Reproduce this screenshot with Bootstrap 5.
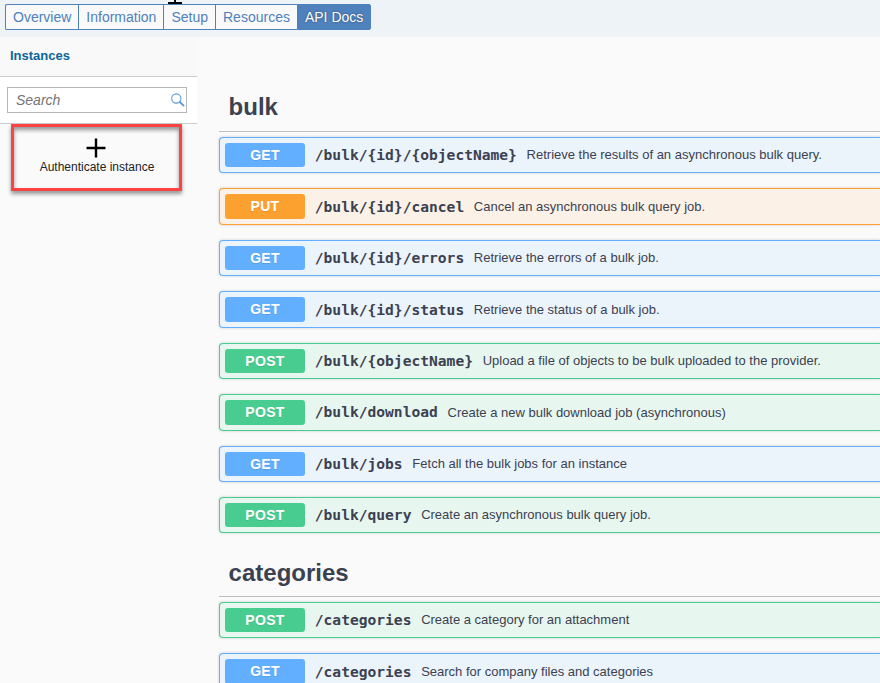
<!DOCTYPE html>
<html lang="en">
<head>
<meta charset="utf-8">
<title>API Docs</title>
<link href="https://cdn.jsdelivr.net/npm/bootstrap@5.3.0/dist/css/bootstrap.min.css" rel="stylesheet">
<style>
body{font-family:"Liberation Sans",Arial,sans-serif;font-size:13px;background:#fafafa;color:#3b4151;height:683px;overflow:hidden}
.topbar{height:37px;background:#eef3f8;padding:4px 0 0 5px}
.tabs{height:26px;font-size:14px}
.tabs .nav-link{padding:0 7px;line-height:24px;color:#4f81bd;background:#f9f9f9;border:1px solid #4f81bd;border-right-width:0;border-radius:0;white-space:nowrap}
.tabs .nav-item:first-child .nav-link{border-radius:2px 0 0 2px}
.tabs .nav-link.active{color:#fff;background:#4f81bd;border-radius:0 2px 2px 0;text-shadow:0 0 2px rgba(0,0,0,.45);border-right-width:1px}
.crosshair{left:168px;top:0}
.side{width:197px}
.side-title{height:40px;line-height:38px;padding-left:10px;background:#f9f9f9;color:#0b659c;border-bottom:1px solid #ccc;font-size:13px}
.side-search{height:47px;background:#fff;border-bottom:1px solid #ccc;padding:10px 10px 0 7px}
.search-box{height:26px;border:1px solid #b7b7b7;background:#fff;padding:0 1px 0 8px}
.search-box input{font-size:14px;font-style:italic;line-height:24px;width:140px;outline:0;color:#757575}
.search-box input::placeholder{color:#757575;opacity:1}
.auth{width:172px;height:67px;margin-left:11px;font-size:12px;color:#222;padding-top:14px}
.auth svg{margin-right:2px}
.callout{left:11px;top:124px;width:171px;height:67px;border:3px solid #fb4343;box-shadow:0 3px 4px rgba(0,0,0,.4),inset 0 3px 4px rgba(0,0,0,.4)}
.docs{margin-left:22px;min-width:0}
.tag-title{font-size:24px;line-height:28px;margin:0 0 5px;border-bottom:1px solid #bfbfc1;color:#3b4151;height:48.5px;padding:11px 0 0 9.6px}
.first-title{margin-top:46.5px;padding-top:9px}
.op{height:36.43px;margin-bottom:15px;border:1px solid;border-right:0;border-radius:4px 0 0 4px;box-shadow:0 0 3px rgba(0,0,0,.19);padding:5px;white-space:nowrap}
.op-get{border-color:#61affe;background:#ebf3fb}
.op-put{border-color:#fca130;background:#fbf1e6}
.op-post{border-color:#49cc90;background:#e8f6f0}
.verb{width:80px;height:24.43px;line-height:24px;border-radius:3px;font-size:14px;letter-spacing:.3px;color:#fff;text-shadow:0 1px 0 rgba(0,0,0,.1)}
.op-get .verb{background:#61affe}
.op-put .verb{background:#fca130}
.op-post .verb{background:#49cc90}
.path{font-family:"DejaVu Sans Mono",monospace;font-size:14.6px;padding:0 9.7px 0 9.8px}
</style>
<script src="https://cdn.jsdelivr.net/npm/bootstrap@5.3.0/dist/js/bootstrap.bundle.min.js"></script>
</head>
<body class="position-relative">
<header class="topbar">
  <ul class="nav tabs flex-nowrap">
    <li class="nav-item"><a class="nav-link" href="#">Overview</a></li>
    <li class="nav-item"><a class="nav-link" href="#">Information</a></li>
    <li class="nav-item"><a class="nav-link" href="#">Setup</a></li>
    <li class="nav-item"><a class="nav-link" href="#">Resources</a></li>
    <li class="nav-item"><a class="nav-link active" href="#">API Docs</a></li>
  </ul>
</header>
<svg class="crosshair position-absolute" width="14" height="5"><path d="M0 2h14v2H0zM6 0h2v4H6z" fill="#000"/></svg>
<div class="d-flex">
  <aside class="side flex-shrink-0">
    <div class="side-title fw-bold">Instances</div>
    <div class="side-search">
      <div class="search-box d-flex align-items-center justify-content-between">
        <input class="border-0 p-0 bg-transparent" type="text" placeholder="Search">
        <svg width="14" height="14" viewBox="0 0 14 14" fill="none" stroke="#5b9bd5"><circle cx="5.3" cy="5.5" r="4.6" stroke-width="1.1"/><path d="M8.8 9l3.8 3.6" stroke-width="1.8" stroke-linecap="round"/></svg>
      </div>
    </div>
    <div class="auth d-flex flex-column align-items-center">
      <svg width="20" height="20" viewBox="0 0 20 20"><path d="M8.8 .5h2.4v8.3h8.3v2.4h-8.3v8.3H8.8v-8.3H.5V8.8h8.3z" fill="#000"/></svg>
      <span>Authenticate instance</span>
    </div>
  </aside>
  <main class="docs flex-grow-1">
    <h2 class="tag-title first-title fw-bold">bulk</h2>
    <div class="op op-get d-flex align-items-center"><span class="verb text-center fw-bold">GET</span><span class="path fw-bold">/bulk/{id}/{objectName}</span><span>Retrieve the results of an asynchronous bulk query.</span></div>
    <div class="op op-put d-flex align-items-center"><span class="verb text-center fw-bold">PUT</span><span class="path fw-bold">/bulk/{id}/cancel</span><span>Cancel an asynchronous bulk query job.</span></div>
    <div class="op op-get d-flex align-items-center"><span class="verb text-center fw-bold">GET</span><span class="path fw-bold">/bulk/{id}/errors</span><span>Retrieve the errors of a bulk job.</span></div>
    <div class="op op-get d-flex align-items-center"><span class="verb text-center fw-bold">GET</span><span class="path fw-bold">/bulk/{id}/status</span><span>Retrieve the status of a bulk job.</span></div>
    <div class="op op-post d-flex align-items-center"><span class="verb text-center fw-bold">POST</span><span class="path fw-bold">/bulk/{objectName}</span><span>Upload a file of objects to be bulk uploaded to the provider.</span></div>
    <div class="op op-post d-flex align-items-center"><span class="verb text-center fw-bold">POST</span><span class="path fw-bold">/bulk/download</span><span>Create a new bulk download job (asynchronous)</span></div>
    <div class="op op-get d-flex align-items-center"><span class="verb text-center fw-bold">GET</span><span class="path fw-bold">/bulk/jobs</span><span>Fetch all the bulk jobs for an instance</span></div>
    <div class="op op-post d-flex align-items-center"><span class="verb text-center fw-bold">POST</span><span class="path fw-bold">/bulk/query</span><span>Create an asynchronous bulk query job.</span></div>
    <h2 class="tag-title fw-bold">categories</h2>
    <div class="op op-post d-flex align-items-center"><span class="verb text-center fw-bold">POST</span><span class="path fw-bold">/categories</span><span>Create a category for an attachment</span></div>
    <div class="op op-get d-flex align-items-center"><span class="verb text-center fw-bold">GET</span><span class="path fw-bold">/categories</span><span>Search for company files and categories</span></div>
  </main>
</div>
<div class="callout position-absolute"></div>
</body>
</html>
